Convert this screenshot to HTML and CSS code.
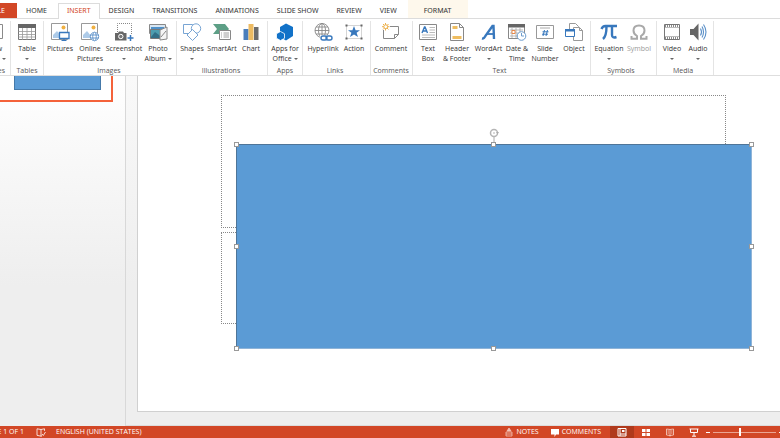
FILE: index.html
```html
<!DOCTYPE html>
<html lang="en">
<head>
<meta charset="utf-8">
<title>Presentation editor</title>
<link rel="stylesheet" href="styles.css">
</head>
<body>
<nav class="tabs">
  <a href="#file" class="tab file">FILE</a>
  <a href="#home" class="tab">HOME</a>
  <a href="#insert" class="tab active">INSERT</a>
  <a href="#design" class="tab">DESIGN</a>
  <a href="#transitions" class="tab">TRANSITIONS</a>
  <a href="#animations" class="tab">ANIMATIONS</a>
  <a href="#slideshow" class="tab">SLIDE SHOW</a>
  <a href="#review" class="tab">REVIEW</a>
  <a href="#view" class="tab">VIEW</a>
  <a href="#format" class="tab format">FORMAT</a>
</nav>

<div class="ribbon">
  <section class="group cut">
    <div class="tools">
      <button class="tool w30">
        <svg viewBox="0 0 18 18"><path d="M1 1.500h15.500v14H1z" fill="#fff" stroke="#8a8a8a"/><path d="M8 5h6M8 8h6M8 11h6" stroke="#aaa"/></svg>
        <span>New<br>Slide <i class="arrow"></i></span>
      </button>
    </div>
    <h2>Slides</h2>
  </section>
  <section class="group tables">
    <div class="tools">
      <button class="tool w30">
        <svg viewBox="0 0 18 18"><path d="M.5 1.500h17v15H.5z" fill="#fff" stroke="#777"/><path d="M0 1h18v4H0z" fill="#666"/><path d="M.5 8.500h17M.5 11.500h17M.5 14h17M4.500 5v12M9 5v12M13.500 5v12" stroke="#999" stroke-width=".8"/></svg>
        <span>Table</span><i class="arrow"></i>
      </button>
    </div>
    <h2>Tables</h2>
  </section>
  <section class="group images">
    <div class="tools">
      <button class="tool w30">
        <svg viewBox="0 0 18 18"><path d="M.5.500h16v16H.5z" fill="#fff" stroke="#999"/><path d="M2 15v-3l4-4 4 5v2z" fill="#aecbe8"/><circle cx="12.500" cy="4.500" r="2" fill="#f0b040"/><path d="M8.500 9.500h9.500v6H8.500z" fill="#fff" stroke="#3878bd" stroke-width="1.300"/><path d="M13 16v1.500M10.500 17.500h5" stroke="#3878bd"/></svg>
        <span>Pictures</span>
      </button>
      <button class="tool w30">
        <svg viewBox="0 0 18 18"><path d="M.5.500h16v16H.5z" fill="#fff" stroke="#999"/><path d="M2 15v-3l4-4 4 5v2z" fill="#aecbe8"/><circle cx="12.500" cy="4.500" r="2" fill="#f0b040"/><g fill="#fff" stroke="#5b90c8" stroke-width=".9"><circle cx="13.500" cy="13.500" r="4.200"/><ellipse cx="13.500" cy="13.500" rx="1.800" ry="4.200"/><path d="M9.500 12h8M9.500 15h8"/></g></svg>
        <span>Online<br>Pictures</span>
      </button>
      <button class="tool w38">
        <svg viewBox="0 0 18 18"><path d="M2.500 9V.500h14V11" fill="none" stroke="#888" stroke-dasharray="1 1"/><path d="M0 10h3l1-1.500h4L9 10h2.500v7.500H0z" fill="#666"/><circle cx="5.800" cy="13.500" r="2.200" fill="#777" stroke="#fff"/><path d="M15.500 12v6M12.500 15h6" stroke="#3878bd" stroke-width="1.500"/></svg>
        <span>Screenshot</span><i class="arrow"></i>
      </button>
      <button class="tool w30">
        <svg viewBox="0 0 18 18"><path d="M.5 1.500h16v9H.5z" fill="#d8e6f2" stroke="#888"/><path d="M2 4h13v4H2z" fill="#4f91c9"/><path d="M1.500 6.500h12v9h-12z" fill="#4d9daf" stroke="#777"/><path d="M2 14l4-5 4 3 3 3H2z" fill="#326f87"/><path d="M11 7l7-3v12l-7 1z" fill="#f5f5f5" stroke="#888"/><path d="M12 14l5-6" stroke="#888"/></svg>
        <span>Photo<br>Album <i class="arrow"></i></span>
      </button>
    </div>
    <h2>Images</h2>
  </section>
  <section class="group illustrations">
    <div class="tools">
      <button class="tool w30">
        <svg viewBox="0 0 18 18"><g fill="#fff" stroke="#78a5d4"><path d="M.5 1.500h9v9h-9z"/><circle cx="13" cy="5.500" r="4.700"/><path d="M9.500 6.500l5.500 5.500-5.500 5.500L4 12z"/></g></svg>
        <span>Shapes</span><i class="arrow"></i>
      </button>
      <button class="tool w30">
        <svg viewBox="0 0 18 18"><path d="M0 1h12l4 5-4 5H0l4-5z" fill="#5d9f86"/><path d="M6.500 7.500h11v9h-11z" fill="#fff" stroke="#888"/><path d="M8 10h1M10.500 10h5.500M8 12h1M10.500 12h5.500M8 14h1M10.500 14h5.500" stroke="#888" stroke-width=".8"/></svg>
        <span>SmartArt</span>
      </button>
      <button class="tool w28">
        <svg viewBox="0 0 18 18"><path d="M1.500 6h5v11h-5z" fill="#4a7ebc"/><path d="M6.500 1h5v16h-5z" fill="#edbb62"/><path d="M12 4h4.500v13H12z" fill="#6c6c6c"/></svg>
        <span>Chart</span>
      </button>
    </div>
    <h2>Illustrations</h2>
  </section>
  <section class="group">
    <div class="tools">
      <button class="tool w34">
        <svg viewBox="0 0 18 18"><path d="M10 .500l7 3.500v9l-7 4.500L4 14V4z" fill="#1272c8"/><path d="M4.500 8.500l4 2.200v4.600l-4 2.200-4-2.200v-4.600z" fill="#1272c8" stroke="#fff" stroke-width=".8"/></svg>
        <span>Apps for<br>Office <i class="arrow"></i></span>
      </button>
    </div>
    <h2>Apps</h2>
  </section>
  <section class="group links">
    <div class="tools">
      <button class="tool w38">
        <svg viewBox="0 0 18 18"><g fill="none" stroke="#888" stroke-width=".9"><circle cx="8" cy="7.500" r="7"/><ellipse cx="8" cy="7.500" rx="3.500" ry="7"/><path d="M1 7.500h14M2 4h12M2 11h12M8 .500v14"/></g><path d="M6 12h12v6H6z" fill="#fff"/><g fill="none" stroke="#3878bd" stroke-width="1.400"><rect x="7" y="13" width="6" height="4" rx="2"/><rect x="12" y="13" width="6" height="4" rx="2"/></g></svg>
        <span>Hyperlink</span>
      </button>
      <button class="tool w24">
        <svg viewBox="0 0 18 18"><path d="M1.500 2.500h15v13h-15z" fill="#fff" stroke="#aaa" stroke-dasharray="1 1"/><path d="M.5 1.500h2v2h-2zM15.500 1.500h2v2h-2zM.5 14.500h2v2h-2zM15.500 14.500h2v2h-2z" fill="#666"/><path d="M9 3l1.600 4.200H15l-3.400 2.600L13 14l-4-2.600L5 14l1.400-4.200L3 7.200h4.400z" fill="#3878bd"/></svg>
        <span>Action</span>
      </button>
    </div>
    <h2>Links</h2>
  </section>
  <section class="group remarks">
    <div class="tools">
      <button class="tool w40">
        <svg viewBox="0 0 18 18"><path d="M1.500 7v8.500h11l4-4V3.500H8" fill="none" stroke="#888"/><path d="M12.500 15.500v-4h4" fill="none" stroke="#888"/><g stroke="#edb04a"><path d="M3.500 0v7.500M0 3.700h7.500M1 1l5.500 5.500M6.500 1L1 6.500"/><circle cx="3.700" cy="3.700" r="1.900" fill="#fff"/></g></svg>
        <span>Comment</span>
      </button>
    </div>
    <h2>Comments</h2>
  </section>
  <section class="group texts">
    <div class="tools">
      <button class="tool w30">
        <svg viewBox="0 0 18 18"><path d="M.5 1.500h17v15H.5z" fill="#fff" stroke="#888"/><path d="M3 10l2.500-6h.500l2.500 6M4 8h3.500" fill="none" stroke="#3878bd" stroke-width="1.400"/><path d="M10.500 4.500H16M10.500 7H16M10.500 9.500H16M3 12H16M3 14.500H16" stroke="#aaa" stroke-width=".8"/></svg>
        <span>Text<br>Box</span>
      </button>
      <button class="tool w28">
        <svg viewBox="0 0 18 18"><path d="M2.500.500h9l4 4v13h-13z" fill="#fff" stroke="#888"/><path d="M11.500.500v4h4" fill="none" stroke="#888"/><path d="M4.500 3h5v3h-5zM4.500 13h9v3h-9z" fill="#efbd60"/></svg>
        <span>Header<br>&amp; Footer</span>
      </button>
      <button class="tool w35">
        <svg viewBox="0 0 18 18"><path d="M2 15.500Q4 16 6 12L12.500 3h1l.5 13" fill="none" stroke="#3878bd" stroke-width="2.400"/><path d="M6 11h8" stroke="#3878bd" stroke-width="1.800"/></svg>
        <span>WordArt</span><i class="arrow"></i>
      </button>
      <button class="tool w22">
        <svg viewBox="0 0 18 18"><path d="M.5 2.500h16v13H.5z" fill="#fff" stroke="#888"/><path d="M0 1h17v3.500H0z" fill="#666"/><path d="M2 7h13M2 10h13M2 13h13M4 5v10M8 5v10M12 5v10" stroke="#aaa" stroke-width=".8"/><path d="M4 7.500h3v3H4z" fill="#fff" stroke="#e8894a"/><circle cx="13.500" cy="13" r="4.300" fill="#fff" stroke="#6c9dce"/><path d="M13.500 10v3H16" fill="none" stroke="#6c9dce"/></svg>
        <span>Date &amp;<br>Time</span>
      </button>
      <button class="tool w34">
        <svg viewBox="0 0 18 18"><path d="M.5 2.500h17v13H.5z" fill="#fff" stroke="#999"/><path d="M4 5h10" stroke="#aaa"/><path d="M8.500 7l-1.500 6M11.500 7L10 13M6.500 8.800h6M6 11.200h6" stroke="#3878bd"/></svg>
        <span>Slide<br>Number</span>
      </button>
      <button class="tool w24">
        <svg viewBox="0 0 18 18"><path d="M4.500.500h6l3 3v5h-9z" fill="#fff" stroke="#999"/><path d="M8.500 4.500h6l3 3v10h-9z" fill="#fff" stroke="#999"/><path d="M14.500 4.500v3h3" fill="none" stroke="#999"/><path d="M.5 6.500h9v7h-9z" fill="#fff" stroke="#3878bd"/><path d="M0 6h10v2.500H0z" fill="#3878bd"/></svg>
        <span>Object</span>
      </button>
    </div>
    <h2>Text</h2>
  </section>
  <section class="group symbols">
    <div class="tools">
      <button class="tool w36">
        <svg viewBox="0 0 18 18"><path d="M1.500 6Q2.500 3 5.500 3H17M6.500 3.500Q6.500 13 3 16M12 3.500V12Q12 15.500 16.500 14" fill="none" stroke="#3878bd" stroke-width="2.400"/></svg>
        <span>Equation</span><i class="arrow"></i>
      </button>
      <button class="tool w24 off" disabled>
        <svg viewBox="0 0 18 18"><path d="M1.500 13v2.800H7V13Q3.500 11 3.500 7.500Q3.500 2.500 9 2.500T14.500 7.500Q14.500 11 11 13v2.800h5.500V13" fill="none" stroke="#a9a9a9" stroke-width="2"/></svg>
        <span>Symbol</span>
      </button>
    </div>
    <h2>Symbols</h2>
  </section>
  <section class="group media">
    <div class="tools">
      <button class="tool w30">
        <svg viewBox="0 0 18 18"><path d="M1.500 1.500h15v15h-15z" fill="#fff" stroke="#777"/><path d="M2 3h14M2 15h14" stroke="#666" stroke-width="1.500" stroke-dasharray="1 1"/><path d="M2 4.500h14M2 13.500h14" stroke="#aaa" stroke-width=".8"/></svg>
        <span>Video</span><i class="arrow"></i>
      </button>
      <button class="tool w22">
        <svg viewBox="0 0 18 18"><path d="M1 6h3.500l5-5.500v17L4.500 12H1z" fill="#666"/><path d="M11.500 5.500Q13.500 9 11.500 12.500M13 3.500Q16 9 13 14.500M14.500 1.500Q19.500 9 14.500 16.500" fill="none" stroke="#5b90c8" stroke-width="1.100"/></svg>
        <span>Audio</span><i class="arrow"></i>
      </button>
    </div>
    <h2>Media</h2>
  </section>
</div>

<main class="work">
  <aside class="thumbs"><div class="thumb"><div class="mini"></div></div></aside>
  <div class="stage">
    <div class="slide">
      <div class="holder title"></div>
      <div class="holder subtitle"></div>
      <div class="shape">
        <svg class="rotate" viewBox="0 0 10 16"><path d="M5 9v7" stroke="#aaa"/><circle cx="5" cy="5" r="3.500" fill="#fff" stroke="#b5b5b5" stroke-width="1.500"/><path d="M7 4h3L8.500 6z" fill="#aaa"/><circle cx="5" cy="5" r="1" fill="#ccc"/></svg>
        <i class="handle top left"></i><i class="handle top center"></i><i class="handle top right"></i>
        <i class="handle middle left"></i><i class="handle middle right"></i>
        <i class="handle bottom left"></i><i class="handle bottom center"></i><i class="handle bottom right"></i>
      </div>
    </div>
  </div>
</main>

<footer class="status">
  <span class="count">SLIDE 1 OF 1</span>
  <button class="proof" aria-label="Spelling"><svg viewBox="0 0 10 9"><path d="M5 1.500L1 .800v6.500l4 .900zM5 1.500L8.500.800v2M5 8.200l1-.300M6 6l1.300 1.500L9.500 4" fill="none" stroke="#fff" stroke-width=".8"/></svg></button>
  <button class="lang">ENGLISH (UNITED STATES)</button>
  <div class="options">
    <button class="notes"><svg viewBox="0 0 8 9"><path d="M4 0l2 3H2zM1 4h6M1 6h6M1 8h6M1 4v4M7 4v4" fill="#f3c4b8" stroke="#f3c4b8" stroke-width=".8"/></svg>NOTES</button>
    <button class="comments"><svg viewBox="0 0 8 9"><path d="M0 1h8v5.500H5L3.500 9V6.500H0z" fill="#fff"/></svg>COMMENTS</button>
    <button class="view on" aria-label="Normal"><svg viewBox="0 0 10 9"><path d="M1 .500h8v7.500H1zM3 .500V8M3 6h6" fill="none" stroke="#fff"/><path d="M5 2h2.500v2H5z" fill="#fff"/></svg></button>
    <button class="view" aria-label="Slide sorter"><svg viewBox="0 0 10 9"><path d="M1 1h3.500v3H1zM5.500 1H9v3H5.500zM1 5h3.500v3H1zM5.500 5H9v3H5.500z" fill="#fff"/></svg></button>
    <button class="view" aria-label="Reading view"><svg viewBox="0 0 10 9"><path d="M5 1.500L1.500 1v6L5 7.500 8.500 7V1zM5 1.500v7M2.500 3h1.500M2.500 5h1.500M6 3h1.500M6 5h1.500" fill="none" stroke="#f8d5cc" stroke-width=".8"/></svg></button>
    <button class="view" aria-label="Slide show"><svg viewBox="0 0 10 9"><path d="M.5 1h9M1.500 1v3.500h7V1M5 4.500V8M3 8.200h4" fill="none" stroke="#fff"/></svg></button>
    <button class="zoom" aria-label="Zoom out"><svg viewBox="0 0 4 9"><path d="M0 4.500h4" stroke="#fff"/></svg></button>
    <input type="range" min="0" max="100" value="42" aria-label="Zoom">
    <button class="zoom" aria-label="Zoom in"><svg viewBox="0 0 4 9"><path d="M0 4.500h4M2 2.500v4" stroke="#fff"/></svg></button>
  </div>
</footer>
</body>
</html>
```
FILE: styles.css
```css
* { box-sizing: border-box; }
body {
  margin: 0;
  height: 100vh;
  display: flex;
  flex-direction: column;
  overflow: hidden;
  background: #fff;
  color: #333;
  font: 7px/10px "Open Sans", "Noto Sans", sans-serif;
}
button {
  margin: 0;
  padding: 0;
  border: 0;
  background: none;
  color: inherit;
  font: inherit;
}
svg { display: block; flex: none; overflow: visible; }

.tabs {
  display: flex;
  flex: none;
  padding-top: 3px;
  border-bottom: 1px solid #dcdcdc;
  font-family: "Noto Sans", "Open Sans", sans-serif;
}
.tab {
  padding: 3px 9px 2px;
  color: #333;
  text-decoration: none;
  white-space: nowrap;
}
.tab.file {
  display: flex;
  justify-content: flex-end;
  width: 17px;
  padding: 3px 12px 2px 0;
  background: #d24726;
  color: #fff;
}
.tab.active {
  margin: 0 0 -1px 2px;
  padding: 2px 8px 3px;
  border: 1px solid #dcdcdc;
  border-bottom: 0;
  background: #fff;
  color: #d24726;
}
.tab.format {
  margin: -3px 0 0 2px;
  padding: 6px 17px 2px 16px;
  background: #fef8ec;
}

.ribbon {
  display: flex;
  flex: none;
  padding-top: 2px;
  border-bottom: 1px solid #dedede;
}
.group {
  display: flex;
  flex: none;
  flex-direction: column;
  align-items: center;
  padding-top: 2px;
  border-right: 1px solid #e4e4e4;
}
.cut { width: 11px; align-items: flex-end; }
.tables { padding-left: 1px; padding-right: 1px; }
.images { padding-left: 1px; padding-right: 3px; }
.illustrations { padding-right: 2px; }
.links { padding-left: 1px; padding-right: 4px; }
.remarks { padding-right: 1px; }
.texts, .media { padding-right: 4px; }
.symbols { padding-right: 5px; }
.group h2 {
  margin: 0;
  color: #555;
  font-size: 7px;
  font-weight: 400;
  line-height: 9px;
  white-space: nowrap;
}
.cut h2 { padding-right: 5px; }
.tools { display: flex; }
.tool {
  display: flex;
  flex: none;
  flex-direction: column;
  align-items: center;
  height: 43px;
  white-space: nowrap;
}
.tool svg { width: 18px; height: 18px; margin-bottom: 3px; }
.tool.off { color: #999; }
.w22 { width: 22px; }
.w24 { width: 24px; }
.w28 { width: 28px; }
.w30 { width: 30px; }
.w34 { width: 34px; }
.w35 { width: 35px; }
.w36 { width: 36px; }
.w38 { width: 38px; }
.w40 { width: 40px; }
.arrow {
  display: inline-block;
  border: 2px solid transparent;
  border-top-color: #666;
  border-bottom: 0;
  vertical-align: middle;
}
.tool > .arrow { margin-top: 4px; }

.work { display: flex; flex: 1; min-height: 0; }
.thumbs {
  flex: none;
  width: 126px;
  border-right: 1px solid #d8d8d8;
  background: linear-gradient(#fff, #eee 60%);
}
.thumb {
  width: 113px;
  height: 26px;
  padding-left: 14px;
  border: solid #f4623a;
  border-width: 0 2px 2px 0;
  background: #fff;
}
.mini { width: 87px; height: 14px; border: 1px solid #4579a9; border-top: 0; background: #5b9bd5; }
.stage {
  flex: 1;
  min-width: 0;
  padding: 0 0 13px 11px;
  border-bottom: 1px solid #ddd;
  background: linear-gradient(#f9f9f9, #eee 60%);
}
.slide {
  position: relative;
  height: 100%;
  border: solid #d0d0d0;
  border-width: 0 0 1px 1px;
  background: #fff;
}
.holder { position: absolute; left: 83px; width: 505px; border: 1px dotted #888; }
.title { top: 19px; height: 133px; }
.subtitle { top: 156px; height: 92px; }
.shape {
  position: absolute;
  left: 98px;
  top: 68px;
  width: 516px;
  height: 205px;
  border: 1px solid #4f7598;
  border-right-color: #8fb4d8;
  border-bottom-color: #8fb4d8;
  background: #5b9bd5;
}
.handle {
  position: absolute;
  width: 5px;
  height: 5px;
  border: 1px solid #999;
  background: #fff;
}
.top { top: -3px; }
.middle { top: calc(50% - 3px); }
.bottom { bottom: -3px; }
.left { left: -3px; }
.center { left: calc(50% - 3px); }
.right { right: -3px; }
.rotate { position: absolute; left: calc(50% - 5px); top: -17px; width: 10px; height: 16px; }

.status {
  display: flex;
  flex: none;
  align-items: center;
  height: 12px;
  overflow: hidden;
  background: #d24726;
  color: #fff;
  white-space: nowrap;
}
.status button { display: flex; align-items: center; flex: none; height: 12px; }
.status svg { height: 9px; }
.count { display: flex; justify-content: flex-end; flex: none; width: 24px; }
.status .proof { margin: 0 10px 0 12px; }
.proof svg, .view svg { width: 10px; }
.options { display: flex; align-items: center; margin: 0 -3px 0 auto; }
.notes svg, .comments svg { width: 8px; margin-right: 3px; }
.status .notes { margin-right: 12px; }
.status .comments { margin-right: 9px; }
.status .view { justify-content: center; width: 24px; }
.status .view.on { background: #b03a1c; }
.zoom svg { width: 4px; }
input[type="range"] {
  width: 63px;
  height: 9px;
  margin: 0 3px;
  appearance: none;
  background: linear-gradient(#eba593, #eba593) center / 100% 1px no-repeat;
}
input[type="range"]::-webkit-slider-thumb {
  appearance: none;
  width: 2px;
  height: 8px;
  background: #fff;
}
```
